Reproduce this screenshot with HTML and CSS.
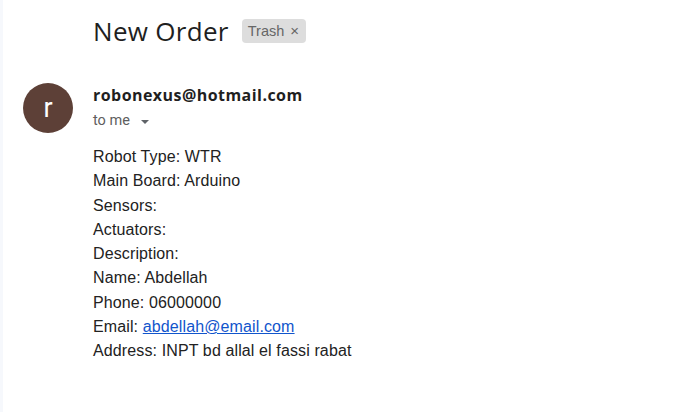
FILE: index.html
```html
<!DOCTYPE html>
<html>
<head>
<meta charset="utf-8">
<link rel="stylesheet" href="styles.css">
</head>
<body>
<div class="page">
  <div class="rail"></div>
  <main class="mail">
    <div class="subject-row">
      <h1 class="subject">New Order</h1>
      <span class="chip">Trash <span class="chip-x">×</span></span>
    </div>
    <div class="message">
      <div class="avatar">r</div>
      <div class="content">
        <div class="sender">robonexus@hotmail.com</div>
        <div class="recipient">to me <svg class="caret" width="8" height="4" viewBox="0 0 8 4"><path d="M0 0h8L4 4z" fill="#5f6368"/></svg></div>
        <div class="body">
          <div>Robot Type: WTR</div>
          <div>Main Board: Arduino</div>
          <div>Sensors:</div>
          <div>Actuators:</div>
          <div>Description:</div>
          <div>Name: Abdellah</div>
          <div>Phone: 06000000</div>
          <div>Email: <a href="#" class="link">abdellah@email.com</a></div>
          <div>Address: INPT bd allal el fassi rabat</div>
        </div>
      </div>
    </div>
  </main>
</div>
</body>
</html>
```

FILE: styles.css
```css
html, body {
  margin: 0;
  padding: 0;
  background: #fff;
}
.page {
  display: flex;
  height: 412px;
  overflow: hidden;
}
.rail {
  width: 3px;
  flex: none;
  background: #f6f8fc;
}
.mail {
  flex: 1;
  padding-left: 20px;
}
.subject-row {
  display: flex;
  align-items: center;
  padding-left: 70px;
  padding-top: 16px;
  height: 30px;
}
.subject {
  margin: 0;
  font-family: "Open Sans", sans-serif;
  font-weight: 400;
  font-size: 26px;
  color: #1f1f1f;
  line-height: 30px;
  letter-spacing: 0.3px;
}
.chip {
  margin-left: 13px;
  background: #dddddd;
  border-radius: 4px;
  font-family: "Liberation Sans", Arial, sans-serif;
  font-size: 14.5px;
  color: #666;
  padding: 3px 7px 3px 6px;
  line-height: 17px;
}
.chip-x {
  margin-left: 2px;
  font-size: 15px;
}
.message {
  display: flex;
  margin-top: 37px;
}
.avatar {
  width: 50px;
  height: 50px;
  border-radius: 50%;
  background: #5d4037;
  color: #fff;
  font-family: "Roboto", sans-serif;
  font-size: 27px;
  display: flex;
  align-items: center;
  justify-content: center;
  flex: none;
}
.content {
  margin-left: 20px;
  padding-top: 2px;
}
.sender {
  font-family: "Open Sans", sans-serif;
  font-weight: 700;
  font-size: 16px;
  letter-spacing: 0.45px;
  color: #1f1f1f;
  line-height: 20px;
}
.recipient {
  font-family: "Roboto", sans-serif;
  font-size: 14.5px;
  color: #5e5e5e;
  line-height: 20px;
  margin-top: 6px;
  display: flex;
  align-items: center;
}
.caret {
  margin-left: 11px;
  margin-top: 1px;
}
.body {
  margin-top: 14px;
  font-family: "Liberation Sans", Arial, sans-serif;
  font-size: 16px;
  letter-spacing: 0.12px;
  line-height: 24.3px;
  color: #222;
}
.link {
  color: #1155cc;
  text-decoration: underline;
}
```
